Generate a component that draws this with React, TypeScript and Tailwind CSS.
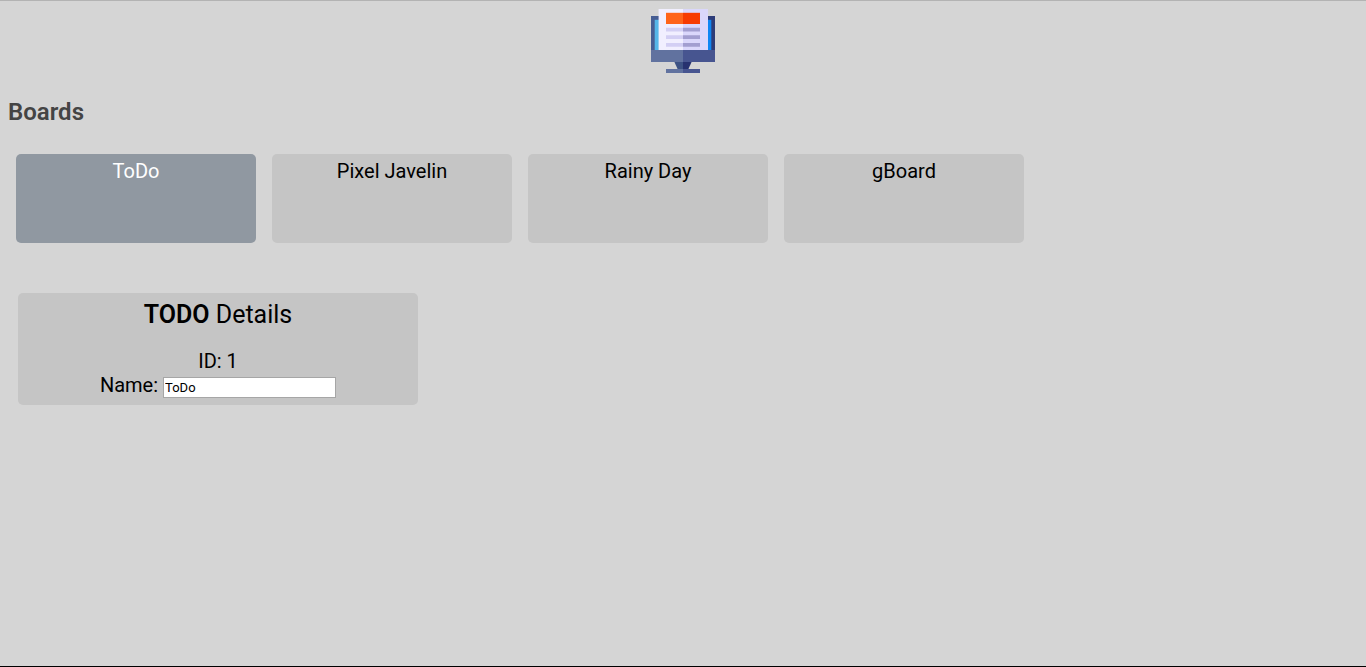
import { useState } from "react";

type Board = { id: number; name: string };

const initialBoards: Board[] = [
  { id: 1, name: "ToDo" },
  { id: 2, name: "Pixel Javelin" },
  { id: 3, name: "Rainy Day" },
  { id: 4, name: "gBoard" },
];

function Logo() {
  return (
    <svg className="size-16" viewBox="0 0 64 64" role="img" aria-label="Board app">
      <path fill="#465d93" d="M0 7h32v34H0z" />
      <path fill="#2d3c78" d="M32 7h32v34H32z" />
      <path fill="#54b5e8" d="M3.7 10.8H32V41H3.7z" />
      <path fill="#0e86f3" d="M32 10.8h28.3V41H32z" />
      <path fill="#f1efff" d="M7.6 0H32v41H7.6z" />
      <path fill="#dad7fb" d="M32 0h25v41H32z" />
      <path fill="#ff641a" d="M15 3.8h17V15H15z" />
      <path fill="#f73b00" d="M32 3.8h17V15H32z" />
      <path fill="#d3cff4" d="M15 18.8h17v3.7H15zM15 26.3h17V30H15zM15 34h17v3.7H15z" />
      <path fill="#a29ed0" d="M32 18.8h17v3.7H32zM32 26.3h17V30H32zM32 34h17v3.7H32z" />
      <path fill="#3d5284" d="M23 52h9v9h-5z" />
      <path fill="#273270" d="M32 52h9l-4 9h-5z" />
      <path fill="#61729f" d="M0 41h32v12H0zM15 60h17v4H15z" />
      <path fill="#475590" d="M32 41h32v12H32zM32 60h17v4H32z" />
    </svg>
  );
}

export default function App() {
  const [boards, setBoards] = useState(initialBoards);
  const [selectedId, setSelectedId] = useState(1);
  const selected = boards.find((b) => b.id === selectedId) ?? boards[0];

  const rename = (name: string) =>
    setBoards(boards.map((b) => (b.id === selectedId ? { ...b, name } : b)));

  return (
    <div className="min-h-screen border-t border-b border-t-[#b3b3b3] border-b-black bg-[#d5d5d5] px-2 pt-2 font-[Roboto,sans-serif] text-black">
      <header className="flex justify-center">
        <Logo />
      </header>
      <main>
        <h1 className="mt-[25px] text-2xl leading-7 font-semibold text-[#444]">Boards</h1>
        <ul className="mt-7 flex flex-wrap gap-4 px-2">
          {boards.map((board) => (
            <li key={board.id}>
              <button
                type="button"
                aria-pressed={board.id === selectedId}
                onClick={() => setSelectedId(board.id)}
                className={`flex h-[89px] w-60 justify-center rounded-[5px] pt-[3px] text-xl leading-7 ${
                  board.id === selectedId ? "bg-[#9098a1] text-white" : "bg-[#c5c5c5]"
                }`}
              >
                {board.name}
              </button>
            </li>
          ))}
        </ul>
        <section className="mt-[50px] ml-[10px] w-[400px] max-w-full rounded-[5px] bg-[#c5c5c5] pt-1 pb-[7px] text-center text-xl leading-6">
          <h2 className="mb-4 text-[25px] leading-9">
            <span className="font-semibold uppercase">{selected.name}</span> Details
          </h2>
          <p>ID: {selected.id}</p>
          <label className="flex items-baseline justify-center gap-[5px]">
            Name:
            <input
              type="text"
              value={selected.name}
              onChange={(e) => rename(e.target.value)}
              className="h-[21px] w-[173px] border border-[#a6a6a6] bg-white px-px pt-px text-[13px]"
            />
          </label>
        </section>
      </main>
    </div>
  );
}
